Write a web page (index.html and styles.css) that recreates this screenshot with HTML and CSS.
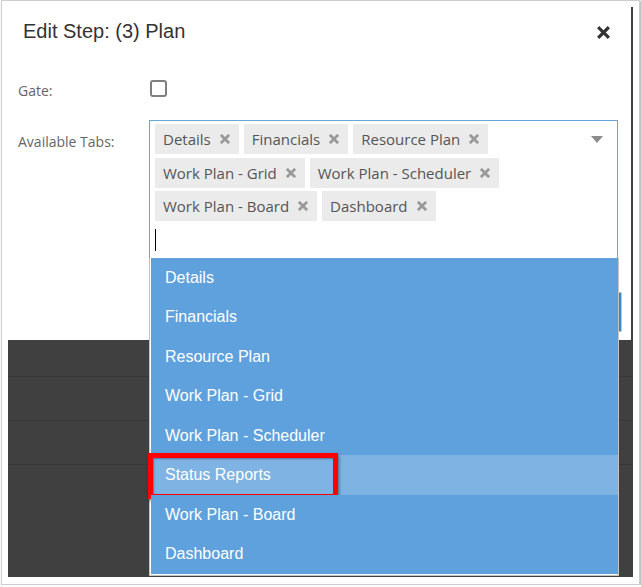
FILE: index.html
```html
<!DOCTYPE html>
<html>
<head>
<meta charset="utf-8">
<link rel="stylesheet" href="styles.css">
</head>
<body>
<div class="frame">
  <div class="screen">
    <div class="top">
      <div class="modal">
        <div class="modal-header">
          <h1 class="title">Edit Step: (3) Plan</h1>
          <span class="close"><svg viewBox="0 0 13 13" width="13" height="13"><path d="M2.3 2.3 L10.7 10.7 M10.7 2.3 L2.3 10.7" stroke="#333" stroke-width="3.2" stroke-linecap="square"/></svg></span>
        </div>
        <div class="form">
          <div class="label gate-label">Gate:</div>
          <div class="control"><span class="checkbox"></span></div>
          <div class="label tabs-label">Available Tabs:</div>
          <div class="control">
            <div class="select">
              <div class="tags">
                <span class="tag">Details<svg class="tx" viewBox="0 0 10 10" width="10" height="10"><path d="M1.8 1.8 L8.2 8.2 M8.2 1.8 L1.8 8.2" stroke="#999" stroke-width="2.7" stroke-linecap="square"/></svg></span>
                <span class="tag">Financials<svg class="tx" viewBox="0 0 10 10" width="10" height="10"><path d="M1.8 1.8 L8.2 8.2 M8.2 1.8 L1.8 8.2" stroke="#999" stroke-width="2.7" stroke-linecap="square"/></svg></span>
                <span class="tag">Resource Plan<svg class="tx" viewBox="0 0 10 10" width="10" height="10"><path d="M1.8 1.8 L8.2 8.2 M8.2 1.8 L1.8 8.2" stroke="#999" stroke-width="2.7" stroke-linecap="square"/></svg></span>
                <span class="tag">Work Plan - Grid<svg class="tx" viewBox="0 0 10 10" width="10" height="10"><path d="M1.8 1.8 L8.2 8.2 M8.2 1.8 L1.8 8.2" stroke="#999" stroke-width="2.7" stroke-linecap="square"/></svg></span>
                <span class="tag">Work Plan - Scheduler<svg class="tx" viewBox="0 0 10 10" width="10" height="10"><path d="M1.8 1.8 L8.2 8.2 M8.2 1.8 L1.8 8.2" stroke="#999" stroke-width="2.7" stroke-linecap="square"/></svg></span>
                <span class="tag">Work Plan - Board<svg class="tx" viewBox="0 0 10 10" width="10" height="10"><path d="M1.8 1.8 L8.2 8.2 M8.2 1.8 L1.8 8.2" stroke="#999" stroke-width="2.7" stroke-linecap="square"/></svg></span>
                <span class="tag">Dashboard<svg class="tx" viewBox="0 0 10 10" width="10" height="10"><path d="M1.8 1.8 L8.2 8.2 M8.2 1.8 L1.8 8.2" stroke="#999" stroke-width="2.7" stroke-linecap="square"/></svg></span>
                <span class="input"><span class="caret"></span></span>
              </div>
              <span class="arrow"></span>
              <ul class="dropdown">
                <li>Details</li>
                <li>Financials</li>
                <li>Resource Plan</li>
                <li>Work Plan - Grid</li>
                <li>Work Plan - Scheduler</li>
                <li class="hl">Status Reports<span class="callout"></span></li>
                <li>Work Plan - Board</li>
                <li>Dashboard</li>
              </ul>
            </div>
          </div>
        </div>
        <div class="modal-footer"><span class="btn"></span></div>
      </div>
      <div class="edge"></div>
    </div>
    <div class="page">
      <div class="prow r1"></div>
      <div class="prow r2"></div>
      <div class="prow r3"></div>
      <div class="prow r4"></div>
    </div>
  </div>
</div>
</body>
</html>
```
FILE: styles.css
```css
* { box-sizing: border-box; }
html, body { margin: 0; padding: 0; background: #fff; }
body { font-family: "Open Sans", sans-serif; }

.frame {
  margin-left: 1px;
  width: 639px;
  height: 585px;
  border: 1px solid #cdcdcd;
  box-shadow: 1px 1px 2px rgba(0,0,0,0.35);
  padding: 0 6px 7px 6px;
  background: #fff;
}
.screen { display: flex; flex-direction: column; height: 576px; }
.top { display: flex; height: 339px; }
.modal { flex: 1; background: #fff; display: flex; flex-direction: column; }
.edge { width: 2px; margin-top: 6px; background: #404040; }

.modal-header {
  display: flex;
  justify-content: space-between;
  align-items: flex-start;
  padding: 18px 21px 0 15px;
}
.title {
  margin: 0;
  font-family: "Liberation Sans", Arial, sans-serif;
  font-weight: normal;
  font-size: 20px;
  line-height: 24px;
  color: #333;
}
.close { display: block; margin-top: 7px; width: 13px; height: 13px; }
.close svg { display: block; }

.form {
  display: grid;
  grid-template-columns: 131px 1fr;
  row-gap: 19px;
  margin-top: 37px;
  padding: 0 13px 0 10px;
}
.label {
  font-size: 14px;
  line-height: 20px;
  color: #666;
}
.gate-label { padding-top: 1px; }
.tabs-label { padding-top: 12px; }
.checkbox {
  display: block;
  width: 17px;
  height: 17px;
  margin-left: 1px;
  border: 2px solid #7f7f7f;
  border-radius: 3px;
  background: #fff;
}

.select {
  position: relative;
  display: flex;
  align-items: flex-start;
  border: 1px solid #6aa6de;
  padding: 3px 0 3px 5px;
  background: #fff;
}
.tags {
  flex: 1;
  display: flex;
  flex-wrap: wrap;
  gap: 3.5px 5px;
}
.tag {
  display: inline-flex;
  align-items: center;
  height: 30px;
  padding: 0 9px 0 8px;
  background: #ebebeb;
  color: #555;
  font-size: 15px;
  white-space: nowrap;
}
.tx { display: block; margin-left: 9px; }
.input {
  flex-basis: 100%;
  height: 30px;
  display: flex;
  align-items: center;
}
.caret { display: block; width: 1px; height: 22px; background: #000; }
.arrow {
  width: 0;
  height: 0;
  margin: 12px 14px 0 20px;
  border-left: 6px solid transparent;
  border-right: 6px solid transparent;
  border-top: 7px solid #8c8c8c;
}

.dropdown {
  position: absolute;
  z-index: 10;
  top: 100%;
  left: -1px;
  width: 470px;
  margin: 0;
  padding: 0 0 1px 1px;
  list-style: none;
  background: #fff;
  border: 1px solid #c3c3c3;
  border-top: none;
}
.dropdown li {
  position: relative;
  height: 39.5px;
  line-height: 39.5px;
  padding-left: 14px;
  background: #5fa1dc;
  color: #fff;
  font-family: "Liberation Sans", Arial, sans-serif;
  font-size: 16px;
}
.dropdown li.hl { background: #7eb3e3; }
.callout {
  position: absolute;
  left: -3px;
  top: -2.5px;
  width: 190px;
  height: 46px;
  border: 5px solid #ff0000;
  box-shadow: 1px 2px 3px rgba(0,0,0,0.45), inset 1px 1px 2px rgba(0,0,0,0.35);
}

.modal-footer {
  display: flex;
  justify-content: flex-end;
  margin-top: 33.5px;
  padding-right: 9px;
}
.btn {
  display: block;
  width: 90px;
  height: 40px;
  border: 1px solid #c8c8c8;
  background: #3b88c9;
}

.page { height: 237px; background: #404040; }
.prow { border-bottom: 1px solid #373737; }
.r1 { height: 37px; }
.r2 { height: 44px; }
.r3 { height: 44px; }
.r4 { border-bottom: none; }
```
